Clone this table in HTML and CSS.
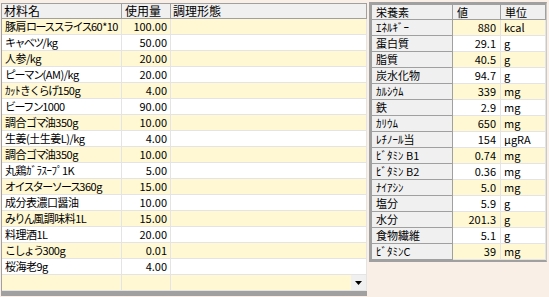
FILE: index.html
```html
<!DOCTYPE html>
<html lang="ja">
<head>
<meta charset="utf-8">
<title>材料</title>
<link rel="stylesheet" href="styles.css">
</head>
<body>
<div class="panel-left">
  <table class="grid grid-left">
    <colgroup><col class="c-name"><col class="c-qty"><col class="c-cook"></colgroup>
    <thead>
      <tr><th>材料名</th><th>使用量</th><th>調理形態</th></tr>
    </thead>
    <tbody>
      <tr><td class="name">豚肩<span class="kn">ローススライス</span>60*10</td><td class="num">100.00</td><td></td></tr>
      <tr><td class="name"><span class="kn">キャベツ</span>/kg</td><td class="num">50.00</td><td></td></tr>
      <tr><td class="name">人参/kg</td><td class="num">20.00</td><td></td></tr>
      <tr><td class="name"><span class="kn">ピーマン</span>(AM)/kg</td><td class="num">20.00</td><td></td></tr>
      <tr><td class="name">ｶｯﾄ<span class="kn">きくらげ</span>150g</td><td class="num">4.00</td><td></td></tr>
      <tr><td class="name"><span class="kn">ビーフン</span>1000</td><td class="num">90.00</td><td></td></tr>
      <tr><td class="name">調合<span class="kn">ゴマ</span>油350g</td><td class="num">10.00</td><td></td></tr>
      <tr><td class="name">生姜(土生姜L)/kg</td><td class="num">4.00</td><td></td></tr>
      <tr><td class="name">調合<span class="kn">ゴマ</span>油350g</td><td class="num">10.00</td><td></td></tr>
      <tr><td class="name">丸鶏ｶﾞﾗｽｰﾌﾟ1K</td><td class="num">5.00</td><td></td></tr>
      <tr><td class="name"><span class="kn">オイスターソース</span>360g</td><td class="num">15.00</td><td></td></tr>
      <tr><td class="name">成分表濃口醤油</td><td class="num">10.00</td><td></td></tr>
      <tr><td class="name"><span class="kn">みりん</span>風調味料1L</td><td class="num">15.00</td><td></td></tr>
      <tr><td class="name">料理酒1L</td><td class="num">20.00</td><td></td></tr>
      <tr><td class="name"><span class="kn">こしょう</span>300g</td><td class="num">0.01</td><td></td></tr>
      <tr><td class="name">桜海老9g</td><td class="num">4.00</td><td></td></tr>
      <tr><td class="name"></td><td></td><td class="combo-cell"><div class="combo"><span class="combo-btn"><svg width="7" height="4" viewBox="0 0 7 4"><polygon points="0,0 7,0 3.5,4" fill="#000"/></svg></span></div></td></tr>
    </tbody>
  </table>
</div>
<div class="panel-right">
  <table class="grid grid-right">
    <colgroup><col class="c-nut"><col class="c-val"><col class="c-unit"></colgroup>
    <thead>
      <tr><th>栄養素</th><th>値</th><th>単位</th></tr>
    </thead>
    <tbody>
      <tr><th>ｴﾈﾙｷﾞｰ</th><td class="num">880</td><td>kcal</td></tr>
      <tr><th>蛋白質</th><td class="num">29.1</td><td>g</td></tr>
      <tr><th>脂質</th><td class="num">40.5</td><td>g</td></tr>
      <tr><th>炭水化物</th><td class="num">94.7</td><td>g</td></tr>
      <tr><th>ｶﾙｼｳﾑ</th><td class="num">339</td><td>mg</td></tr>
      <tr><th>鉄</th><td class="num">2.9</td><td>mg</td></tr>
      <tr><th>ｶﾘｳﾑ</th><td class="num">650</td><td>mg</td></tr>
      <tr><th>ﾚﾁﾉｰﾙ当</th><td class="num">154</td><td>μgRA</td></tr>
      <tr><th>ﾋﾞﾀﾐﾝ B1</th><td class="num">0.74</td><td>mg</td></tr>
      <tr><th>ﾋﾞﾀﾐﾝ B2</th><td class="num">0.36</td><td>mg</td></tr>
      <tr><th>ﾅｲｱｼﾝ</th><td class="num">5.0</td><td>mg</td></tr>
      <tr><th>塩分</th><td class="num">5.9</td><td>g</td></tr>
      <tr><th>水分</th><td class="num">201.3</td><td>g</td></tr>
      <tr><th>食物繊維</th><td class="num">5.1</td><td>g</td></tr>
      <tr><th>ﾋﾞﾀﾐﾝC</th><td class="num">39</td><td>mg</td></tr>
    </tbody>
  </table>
</div>
</body>
</html>
```
FILE: styles.css
```css
html, body {
  margin: 0;
  padding: 0;
}
body {
  background: #f9efe6;
  display: flex;
  align-items: flex-start;
  font-family: "Noto Sans CJK JP", "Noto Sans", sans-serif;
  color: #000;
  width: 549px;
  height: 297px;
  overflow: hidden;
}
.grid {
  border-collapse: separate;
  border-spacing: 0;
  table-layout: fixed;
}
.grid th, .grid td {
  padding: 0;
  overflow: hidden;
  white-space: nowrap;
  text-align: left;
  font-weight: normal;
}
.grid thead th {
  background: #f0f0f0;
  border-top: 1px solid #a0a0a0;
  border-bottom: 1px solid #a0a0a0;
  border-right: 1px solid #a0a0a0;
  height: 14px;
  line-height: 14px;
  font-size: 12px;
}
.grid td {
  height: 15px;
  line-height: 15px;
  font-size: 11px;
  border-bottom: 1px solid #e4e4e4;
  border-right: 1px solid #e4e4e4;
  background: #fff;
}
.grid tbody tr:nth-child(odd) td {
  background: #fff8d3;
}
.grid td.num {
  text-align: right;
}

/* left grid */
.panel-left {
  margin: 3px 0 0 1px;
  border-left: 1px solid #a0a0a0;
  border-bottom: 5px solid #a0a0a0;
}
.grid-left {
  width: 365px;
}
.c-name { width: 120px; }
.c-qty { width: 49px; }
.c-cook { width: 196px; }
.grid-left thead th { padding-left: 2px; }
.grid-left thead th:nth-child(2) { padding-left: 3px; }
.grid-left td { padding-left: 3px; }
.grid-left td.name { letter-spacing: -0.5px; }
.grid-left .kn { letter-spacing: -1.6px; }
.grid-left td.num { padding-left: 0; padding-right: 3px; }
.combo-cell { padding: 0; }
.combo {
  display: flex;
  justify-content: flex-end;
  align-items: center;
  height: 15px;
}
.combo-btn {
  width: 15px;
  height: 15px;
  background: #f0f0f0;
  display: flex;
  align-items: center;
  justify-content: center;
}
.combo-btn svg { display: block; }

/* right grid */
.panel-right {
  margin: 2px 0 0 2px;
  border-top: 2px solid #a0a0a0;
  border-left: 2px solid #a0a0a0;
  border-right: 1px solid #c8c8c8;
  border-bottom: 2px solid #a0a0a0;
}
.grid-right {
  width: 175px;
}
.c-nut { width: 82px; }
.c-val { width: 48px; }
.c-unit { width: 45px; }
.grid-right thead th {
  font-size: 11px;
  padding-left: 4px;
}
.grid-right thead th:first-child {
  border-left: 1px solid #a0a0a0;
}
.grid-right tbody th {
  background: #f0f0f0;
  border-left: 1px solid #a0a0a0;
  border-right: 1px solid #a0a0a0;
  border-bottom: 1px solid #a0a0a0;
  height: 15px;
  line-height: 15px;
  font-size: 11px;
  padding-left: 4px;
}
.grid-right td { padding-left: 3px; }
.grid-right td.num { padding-left: 0; padding-right: 4px; }
```
